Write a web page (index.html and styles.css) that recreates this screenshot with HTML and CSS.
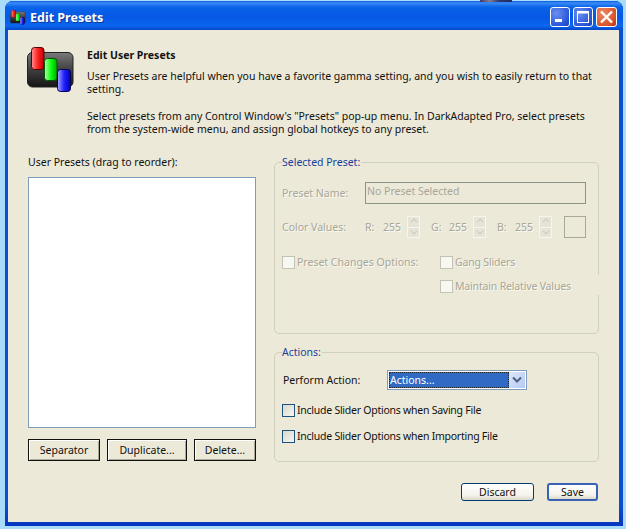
FILE: index.html
```html
<!DOCTYPE html>
<html lang="en">
<head>
<meta charset="utf-8">
<title>Edit Presets</title>
<link rel="stylesheet" href="styles.css">
</head>
<body>
<svg class="defs" width="0" height="0" aria-hidden="true">
  <defs>
    <linearGradient id="gDark" x1="0" y1="0" x2="0" y2="1"><stop offset="0" stop-color="#7a7a7a"/><stop offset=".5" stop-color="#3f3f3f"/><stop offset="1" stop-color="#141414"/></linearGradient>
    <linearGradient id="gRed" x1="0" y1="0" x2="1" y2="0"><stop offset="0" stop-color="#ff9090"/><stop offset=".5" stop-color="#f22"/><stop offset="1" stop-color="#b00"/></linearGradient>
    <linearGradient id="gGreen" x1="0" y1="0" x2="1" y2="0"><stop offset="0" stop-color="#b0ffb0"/><stop offset=".5" stop-color="#1f1"/><stop offset="1" stop-color="#0a0"/></linearGradient>
    <linearGradient id="gBlue" x1="0" y1="0" x2="1" y2="0"><stop offset="0" stop-color="#a8a8ff"/><stop offset=".5" stop-color="#22f"/><stop offset="1" stop-color="#00a"/></linearGradient>
    <symbol id="presetIcon" viewBox="0 0 48 46">
      <rect x="0.5" y="5.5" width="45.5" height="34.5" rx="5" fill="url(#gDark)" stroke="#222"/>
      <rect x="4.5" y="0.5" width="12.5" height="22" rx="3" fill="url(#gRed)" stroke="#500"/>
      <rect x="17.5" y="11.5" width="12.5" height="22" rx="3" fill="url(#gGreen)" stroke="#050"/>
      <rect x="30.5" y="22.5" width="13" height="22" rx="3" fill="url(#gBlue)" stroke="#005"/>
    </symbol>
  </defs>
</svg>
<div class="window">
  <header class="titlebar">
    <svg class="title-icon" width="16" height="15"><use href="#presetIcon"/></svg>
    <span class="title-text">Edit Presets</span>
    <div class="caption-buttons">
      <span class="cap cap-blue"><svg width="20" height="20" viewBox="0 0 20 20"><rect x="5" y="12" width="7" height="3" fill="#fff"/></svg></span>
      <span class="cap cap-blue"><svg width="20" height="20" viewBox="0 0 20 20"><rect x="4.5" y="4.5" width="11" height="11" fill="none" stroke="#fff"/><rect x="4" y="4" width="12" height="2.5" fill="#fff"/></svg></span>
      <span class="cap cap-red"><svg width="21" height="20" viewBox="0 0 21 20"><path d="M5 4.5l11 11M16 4.5l-11 11" stroke="#fff" stroke-width="2.4" fill="none"/></svg></span>
    </div>
  </header>
  <main class="client">
    <section class="intro">
      <svg class="intro-icon" width="48" height="46"><use href="#presetIcon"/></svg>
      <div class="intro-text">
        <h1>Edit User Presets</h1>
        <p>User Presets are helpful when you have a favorite gamma setting, and you wish to easily return to that setting.</p>
        <p>Select presets from any Control Window's "Presets" pop-up menu. In DarkAdapted Pro, select presets from the system-wide menu, and assign global hotkeys to any preset.</p>
      </div>
    </section>
    <div class="columns">
      <section class="left">
        <div class="list-label">User Presets (drag to reorder):</div>
        <div class="listbox"></div>
        <div class="list-buttons">
          <button class="btn-flat btn-sep">Separator</button>
          <button class="btn-flat btn-dup">Duplicate...</button>
          <button class="btn-flat btn-del">Delete...</button>
        </div>
      </section>
      <section class="right">
        <fieldset class="group group-selected">
          <legend>Selected Preset:</legend>
          <div class="row row-name">
            <span class="lbl-col dim">Preset Name:</span>
            <span class="name-field">No Preset Selected</span>
          </div>
          <div class="row row-color">
            <span class="lbl-col dim">Color Values:</span>
            <span class="chan dim">R:</span><span class="val dim">255</span><span class="spin"><i class="up"></i><i class="down"></i></span>
            <span class="chan dim">G:</span><span class="val dim">255</span><span class="spin"><i class="up"></i><i class="down"></i></span>
            <span class="chan dim">B:</span><span class="val dim">255</span><span class="spin"><i class="up"></i><i class="down"></i></span>
            <span class="swatch"></span>
          </div>
          <div class="options">
            <div class="check dim"><span class="box"></span>Preset Changes Options:</div>
            <div class="sub-options">
              <div class="check dim narrow"><span class="box"></span>Gang Sliders</div>
              <div class="check dim narrow check-maintain"><span class="box"></span>Maintain Relative Values</div>
            </div>
          </div>
        </fieldset>
        <fieldset class="group group-actions">
          <legend>Actions:</legend>
          <div class="row row-action">
            <span class="action-label">Perform Action:</span>
            <span class="combo"><span class="combo-value"><span>Actions...</span></span><span class="combo-btn"><svg width="10" height="8" viewBox="0 0 10 8"><path d="M1 1.5l4 4 4-4" fill="none" stroke="#4d6185" stroke-width="2"/></svg></span></span>
          </div>
          <div class="check check-on"><span class="box"></span>Include Slider Options when Saving File</div>
          <div class="check check-on"><span class="box"></span>Include Slider Options when Importing File</div>
        </fieldset>
      </section>
    </div>
    <footer class="footer">
      <button class="btn-xp btn-discard">Discard</button>
      <button class="btn-xp btn-save">Save</button>
    </footer>
  </main>
</div>
</body>
</html>
```
FILE: styles.css
```css
* { box-sizing: border-box; }
html, body { margin: 0; height: 100%; }
body {
  width: 626px; height: 529px; overflow: hidden;
  background: #a9dcf8;
  font: 10.5px/13px "Noto Sans", "DejaVu Sans", sans-serif;
  color: #111;
  padding: 1px 3px 3px 5px;
  position: relative;
}
body::before {
  content: ""; position: absolute; left: 480px; top: 0; width: 32px; height: 2px;
  background: linear-gradient(90deg, #3a3a6a, #8a7a90 30%, #2a3a70 60%, #202a60);
}
.defs { position: absolute; }
.window {
  width: 618px; height: 525px;
  display: flex; flex-direction: column;
  background: linear-gradient(#0a4fd0 0, #0a4fd0 96%, #0735c0 100%);
  border-radius: 8px 8px 0 0;
  padding: 0 4px 4px 3px;
}
.titlebar {
  height: 29px; flex: none;
  margin: 0 -4px 0 -3px; padding: 5px 6px 0 5px;
  display: flex; align-items: center;
  border-radius: 8px 8px 0 0;
  background: linear-gradient(#0a58dc 0, #3a8cf6 2px, #0a63e8 6px, #0558e6 16px, #0a66ee 25px, #0446c8 29px);
}
.title-icon { margin: -2px 4px 0 0; flex: none; }
.title-text { color: #fff; font: 700 12.5px/16px "Noto Sans", sans-serif; text-shadow: 1px 1px 0 #0a3aa0; }
.caption-buttons { margin-left: auto; display: flex; gap: 3px; margin-top: -2px; }
.cap {
  width: 20px; height: 20px; display: block;
  border: 1px solid #fff; border-radius: 3px;
  line-height: 0;
}
.cap svg { margin: -1px; display: block; }
.cap-blue { background: radial-gradient(circle at 30% 30%, #6a8ff0, #2a56d8 70%, #1a3fc0); }
.cap-red { width: 21px; background: radial-gradient(circle at 30% 30%, #ec8a68, #d8532a 70%, #b83010); }
.client {
  flex: 1; min-height: 0;
  background: #ece9d8;
  padding: 17px 20px 0 20px;
  display: flex; flex-direction: column;
}
.intro { display: flex; height: 108px; flex: none; }
.intro-icon { flex: none; margin: 0 12px 0 -1px; }
.intro-text { padding-top: 2px; }
.intro-text h1 { margin: 0 0 8px; font-size: 10.5px; line-height: 13px; font-weight: 700; }
.intro-text p { margin: 0 0 14px; width: 510px; }
.columns { display: flex; gap: 18px; flex: none; }
.left { width: 228px; flex: none; }
.list-label { height: 22px; line-height: 13px; padding-top: 1px; }
.listbox { height: 251px; background: #fff; border: 1px solid #7f9db9; }
.list-buttons { margin-top: 11px; display: flex; justify-content: space-between; }
.btn-flat {
  height: 22px; padding: 0; font: inherit; color: inherit;
  background: #ece9d8; border: 1px solid #111;
  box-shadow: inset 1px 1px 0 #fff, inset -1px -1px 0 #aca899;
}
.btn-sep { width: 72px; }
.btn-dup { width: 80px; }
.btn-del { width: 62px; }
.right { width: 325px; flex: none; }
.group {
  margin: 0; padding: 0 0 0 7px; min-width: 0;
  border: 1px solid #d0d0bf; border-radius: 5px;
  position: relative;
}
.group legend { color: #1a3f9c; padding: 0 1px 0 0; margin-left: 0; line-height: 13px; }
.group-selected { height: 178px; margin-top: 1px; }
.group-actions { height: 116px; margin-top: 12px; }
.dim { color: #a8a698; text-shadow: 1px 1px 0 #fafaf2; }
.narrow { letter-spacing: -.17px; }
.row { display: flex; align-items: center; }
.row-name { height: 22px; margin-top: 13px; }
.lbl-col { width: 83px; flex: none; }
.name-field {
  width: 221px; height: 22px; border: 1px solid #8c9488;
  color: #a8a698; padding: 2px 0 0 1px; line-height: 13px; background: #ece9d8;
}
.row-color { height: 22px; margin-top: 12px; }
.chan { width: 18px; flex: none; }
.val { width: 24px; flex: none; }
.spin { width: 13px; height: 22px; margin-right: 11px; background: #f6f5ee; display: flex; flex-direction: column; flex: none; padding: 1px; gap: 1px; }
.spin i { flex: 1; background: #e6e4d6; position: relative; display: block; }
.spin i::after {
  content: ""; position: absolute; left: 3px; top: 2px; width: 5px; height: 5px;
  border-left: 1px solid #c8c6b8; border-top: 1px solid #c8c6b8;
  transform: rotate(45deg) scale(.8);
}
.spin .down::after { transform: rotate(225deg) scale(.8); top: 0; }
.swatch { width: 22px; height: 22px; border: 1px solid #a8a898; margin-left: 1px; }
.options { display: flex; margin-top: 17px; }
.options > .check { width: 158px; flex: none; }
.sub-options { display: flex; flex-direction: column; gap: 10px; }
.check { display: flex; align-items: center; height: 14px; white-space: nowrap; }
.box { width: 13px; height: 13px; margin-right: 2px; flex: none; background: #f8f8f2; border: 1px solid #c4c2b4; }
.check-maintain { position: relative; }
.check-maintain::after {
  content: ""; position: absolute; left: 150px; top: -4px; width: 12px; height: 20px; background: #ece9d8;
}
.row-action { height: 20px; margin-top: 11px; margin-bottom: 13px; }
.action-label { width: 105px; padding-left: 1px; flex: none; }
.combo {
  width: 140px; height: 20px; display: flex; background: #fff;
  border: 1px solid #7f9db9; padding: 1px;
}
.combo-value { flex: 1; background: #316ac5; color: #fff; border: 1px dotted #222; line-height: 15px; padding-left: 0; }
.combo-btn { width: 16px; flex: none; display: flex; align-items: center; justify-content: center; background: linear-gradient(135deg, #dfe8fb, #b4c8f2); }
.group-actions .check { margin-bottom: 12px; color: #111; letter-spacing: -.25px; }
.check-on .box { background: linear-gradient(135deg, #d8d8cc, #f6f6f0); border: 1px solid #1c5180; }
.footer { display: flex; justify-content: flex-end; padding: 21px 1px 0 0; flex: none; }
.btn-xp {
  height: 18px; padding: 0; font: inherit; color: #111;
  background: linear-gradient(#fff, #f4f3ec 70%, #dcd8c8);
  border: 1px solid #003c74; border-radius: 3px;
}
.btn-discard { width: 73px; margin-right: 13px; }
.btn-save { width: 51px; border: 2px solid #3a62b4; line-height: 12px; }
```
